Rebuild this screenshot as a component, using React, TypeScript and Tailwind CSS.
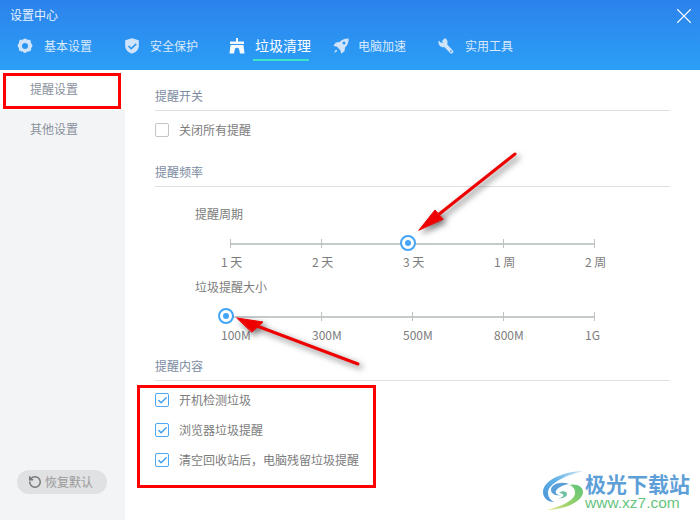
import { RotateCw, X, Check } from 'lucide-react';

const tabs = [
  { label: '基本设置', icon: 'gear', width: 'w-[107px]', gap: 'ml-[11px]' },
  { label: '安全保护', icon: 'shield', width: 'w-[105px]', gap: 'ml-[10px]' },
  { label: '垃圾清理', icon: 'broom', width: 'w-[104px]', gap: 'ml-[10px]', active: true },
  { label: '电脑加速', icon: 'rocket', width: 'w-[105px]', gap: 'ml-[9px]' },
  { label: '实用工具', icon: 'wrench', width: 'w-[110px]', gap: 'ml-[11px]' },
];

function TabIcon({ name, active }: { name: string; active?: boolean }) {
  const color = active ? '#f4f9fe' : '#cfe4fb';
  return (
    <svg viewBox="0 0 16 16" className="w-4 h-4 shrink-0" fill={color}>
      {name === 'gear' && (
        <path
          fillRule="evenodd"
          d="M8 .6c1 0 1.700 1 2.600 1.200.9.2 2-.2 2.700.4.7.7.4 1.800.8 2.700.3.9 1.300 1.500 1.300 2.500s-.8 1.800-1.100 2.700c-.3.9 0 2-.7 2.600-.7.7-1.900.5-2.800.9-.9.4-1.700 1.300-2.800 1.300s-1.900-.9-2.800-1.300c-.9-.4-2-.2-2.700-.9-.7-.7-.4-1.800-.7-2.700C1.500 9.100.6 8.400.6 7.400s1-1.600 1.300-2.500c.4-.9.1-2 .8-2.700.7-.6 1.800-.2 2.700-.4C6.300 1.600 7 .6 8 .6zM8 5a3 3 0 1 0 0 6 3 3 0 0 0 0-6z"
        />
      )}
      {name === 'shield' && (
        <path
          fillRule="evenodd"
          d="M8 .3l6.800 2v5.500c0 4-3 6.600-6.800 7.900-3.800-1.300-6.800-3.900-6.800-7.900V2.300L8 .3zm3.700 5L7.200 9.500 5 7.400 3.900 8.500l3.300 3.200 5.600-5.300-1.100-1.100z"
        />
      )}
      {name === 'broom' && (
        <path d="M7 0h2v3.500h6V6H1V3.500h6V0zM1.500 7h13l1 8.500H11l-.7-3.500a2.300 2.300 0 0 0-4.600 0L5 15.500H.5l1-8.500z" />
      )}
      {name === 'rocket' && (
        <path
          fillRule="evenodd"
          d="M15.600.4c.2 3.800-.9 6.700-3.600 9.100l-.5 3.800-3.400 2.400-.6-3.300-3.800-3.800-3.300-.6 2.400-3.400 3.800-.5C9 1.400 11.800.2 15.600.4zM11 3.500a1.500 1.500 0 1 0 0 3 1.500 1.500 0 0 0 0-3zM2.900 11.500l1.600 1.600L1 15l1.900-3.500z"
        />
      )}
      {name === 'wrench' && (
        <path
          fillRule="evenodd"
          d="M6.600.3L4.200 2.800l.6 2.100-2 -.4L.7 2.500C-.4 6.300 2.400 9.800 6.200 9.100l5.900 6c1.500 1.400 4.300-1.100 2.800-2.700L9.200 6.600C10.200 3.300 9 .6 6.600.3zM13 12.200a.9.9 0 1 0 0 1.800.9.9 0 0 0 0-1.800z"
        />
      )}
    </svg>
  );
}

function SectionTitle({ children }: { children: string }) {
  return (
    <div className="h-[24px] border-b border-[#e0e0e0] text-[12px] leading-[18px] text-[#7b8ba1]">
      {children}
    </div>
  );
}

function CheckRow({ label, checked }: { label: string; checked?: boolean }) {
  return (
    <div className="flex items-center h-[30px] text-[12px] text-[#7c7c7c]">
      <span
        className={
          checked
            ? 'w-[14px] h-[14px] mr-[10px] flex items-center justify-center rounded-[2px] border border-[#4ea8f5] bg-white'
            : 'w-[14px] h-[14px] mr-[10px] rounded-[2px] border border-[#c4c4c4] bg-white'
        }
      >
        {checked && <Check size={11} strokeWidth={3} className="text-[#3f9cf0]" />}
      </span>
      {label}
    </div>
  );
}

function Slider({ labels, thumb }: { labels: string[]; thumb: number }) {
  return (
    <div className="ml-[66px] w-[387px]">
      <div className="relative ml-[9px] w-[365px] h-[11px] flex justify-between items-center">
        <div className="absolute left-0 right-0 top-[5px] h-[2px] bg-[#c5cacc]" />
        {labels.map((l) => (
          <span key={l} className="relative w-px h-[9px] bg-[#c0c0c0]" />
        ))}
        <span
          className="absolute top-[-3px] w-4 h-4 -ml-2 rounded-full border-2 border-[#45a5f5] bg-white flex items-center justify-center"
          style={{ left: thumb }}
        >
          <span className="w-[6px] h-[6px] rounded-full bg-[#45a5f5]" />
        </span>
      </div>
      <div className="mt-[4px] flex text-[12px] leading-[18px] text-[#7c7c7c]">
        {labels.map((l) => (
          <span key={l} className="w-[91px] shrink-0 whitespace-nowrap">
            {l}
          </span>
        ))}
      </div>
    </div>
  );
}

export default function App() {
  return (
    <div
      className="relative w-[700px] h-[520px] overflow-hidden bg-white"
      style={{ fontFamily: '"Noto Sans CJK SC", "Liberation Sans", sans-serif' }}
    >
      {/* Cabecera */}
      <div className="h-[70px] bg-gradient-to-b from-[#2c82ec] to-[#2b9ff6] relative">
        <div className="pt-[6px] pl-[10px] text-[12px] leading-[18px] text-[#e8f2fd]">设置中心</div>
        <X size={26} strokeWidth={1} className="absolute top-[3px] right-[3px] text-white" />
        <div className="flex pl-[17px] pt-[10px]">
          {tabs.map((t) => (
            <div key={t.label} className={`${t.width} relative flex items-center h-[24px]`}>
              <TabIcon name={t.icon} active={t.active} />
              <span
                className={
                  t.active
                    ? `${t.gap} text-[14px] leading-[20px] text-white -mt-[3px]`
                    : `${t.gap} text-[12px] leading-[18px] text-[#d9eafc]`
                }
              >
                {t.label}
              </span>
              {t.active && (
                <span className="absolute left-[24px] top-[25px] w-[56px] h-[2px] bg-[#3fe3c8]" />
              )}
            </div>
          ))}
        </div>
      </div>

      <div className="flex h-[450px]">
        {/* Menu lateral */}
        <div className="w-[125px] shrink-0 bg-[#f3f4f6] flex flex-col text-[12px] text-[#8a919c]">
          <div className="h-[40px] bg-white pl-[30px] pt-[10px] leading-[18px]">提醒设置</div>
          <div className="h-[40px] pl-[30px] pt-[10px] leading-[18px]">其他设置</div>
          <div className="mt-auto mb-[26px] ml-[17px] w-[90px] h-[24px] rounded-full bg-[#e0e1e3] flex items-center pl-[11px] text-[#999999]">
            <RotateCw size={14} strokeWidth={2.6} className="text-[#777777] mr-[3px] -scale-x-100" />
            恢复默认
          </div>
        </div>

        {/* Contenido */}
        <div className="w-[515px] ml-[30px] pt-[17px]">
          <SectionTitle>提醒开关</SectionTitle>
          <div className="pt-[4px]">
            <CheckRow label="关闭所有提醒" />
          </div>
          <div className="mt-[18px]">
            <SectionTitle>提醒频率</SectionTitle>
          </div>
          <div className="pl-[40px] pt-[18px] pb-[15px] text-[12px] leading-[18px] text-[#7c7c7c]">提醒周期</div>
          <Slider labels={['1 天', '2 天', '3 天', '1 周', '2 周']} thumb={177.5} />
          <div className="pl-[40px] pt-[7px] pb-[15px] text-[12px] leading-[18px] text-[#7c7c7c]">垃圾提醒大小</div>
          <Slider labels={['100M', '300M', '500M', '800M', '1G']} thumb={-4} />
          <div className="mt-[13px]">
            <SectionTitle>提醒内容</SectionTitle>
          </div>
          <div className="pt-[4px]">
            <CheckRow label="开机检测垃圾" checked />
            <CheckRow label="浏览器垃圾提醒" checked />
            <CheckRow label="清空回收站后，电脑残留垃圾提醒" checked />
          </div>
        </div>
      </div>

      {/* Anotaciones */}
      <div className="absolute left-[3px] top-[73px] w-[118px] h-[36px] border-[3px] border-[#ff0000]" />
      <div className="absolute left-[137px] top-[385px] w-[239px] h-[103px] border-[3px] border-[#ff0000]" />
      <svg
        className="absolute left-0 top-0 w-[700px] h-[520px] pointer-events-none drop-shadow-[3px_3px_3px_rgba(0,0,0,0.55)]"
        viewBox="0 0 700 520"
      >
        <g fill="#ee0000" stroke="#ee0000" strokeLinejoin="round" strokeLinecap="round">
          <path d="M515 154L438 215" strokeWidth="3" fill="none" />
          <path d="M419 230L435 210L443 219Z" strokeWidth="1" />
          <path d="M358 364L257 326" strokeWidth="3" fill="none" />
          <path d="M237 318L263 322L252 332Z" strokeWidth="1" />
        </g>
      </svg>

      {/* Marca de agua */}
      <div className="absolute left-[543px] top-[470px] flex items-start">
        <svg viewBox="0 0 40 40" className="w-[40px] h-[40px]">
          <defs>
            <linearGradient id="azul" x1="1" y1="0" x2="0" y2="1">
              <stop offset="0" stopColor="#cfe6f5" />
              <stop offset="0.5" stopColor="#5fb0e6" />
              <stop offset="1" stopColor="#4d94d6" />
            </linearGradient>
            <linearGradient id="verde" x1="1" y1="0" x2="0" y2="1">
              <stop offset="0" stopColor="#5cc47a" />
              <stop offset="0.6" stopColor="#9bd36a" />
              <stop offset="1" stopColor="#efe89a" />
            </linearGradient>
          </defs>
          <path d="M40 1C22 1 0 10 0 22c0 6 5 10 11 10-4-2-6-5-6-9C5 13 24 5 40 1z" fill="url(#azul)" />
          <path d="M26 14C18 11 8 14 8 20c0 4 5 6 10 5-4 0-6-2-5-4 1-3 7-6 13-7z" fill="#5a9fd8" />
          <path d="M26 15c8-2 14 2 14 7 0 10-20 18-36 18 12-3 28-9 28-17 0-4-2-7-6-8z" fill="url(#verde)" />
          <path d="M16 23c3-3 8-2 8 1 0 3-5 5-9 4 4 0 6-2 5-3.500-1-1-2.500-1.500-4-1.500z" fill="#6fc0a0" />
        </svg>
        <div className="ml-[2px] flex flex-col pt-[1px]">
          <span className="text-[21px] leading-[25px] h-[25px] font-bold text-[#5f9fd8] whitespace-nowrap">极光下载站</span>
          <span
            className="text-[15.500px] leading-[14px] text-[#66c47e] whitespace-nowrap"
            style={{ fontFamily: '"Liberation Sans", sans-serif' }}
          >
            www.xz7.com
          </span>
        </div>
      </div>
    </div>
  );
}
